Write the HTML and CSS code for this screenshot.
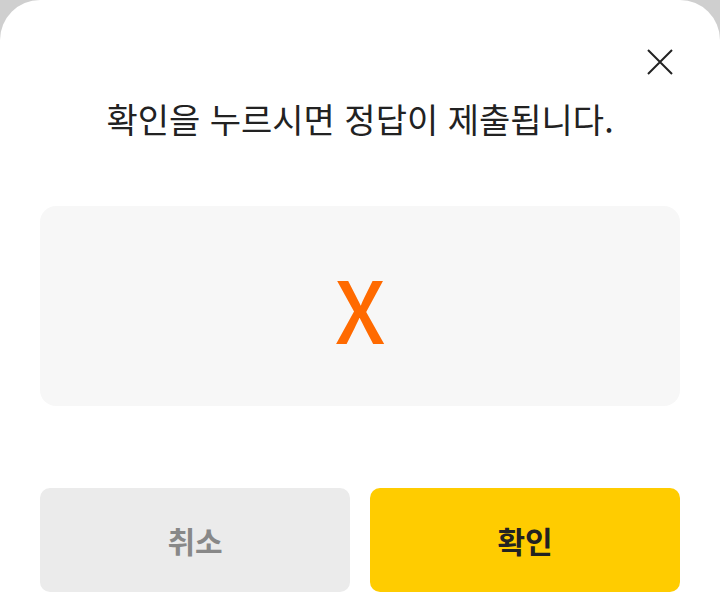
FILE: index.html
```html
<!DOCTYPE html>
<html lang="ko">
<head>
<meta charset="utf-8">
<link rel="stylesheet" href="styles.css">
</head>
<body>
<div class="sheet">
  <div class="header">
    <button class="close" aria-label="닫기">
      <svg width="26" height="26" viewBox="0 0 26 26"><path d="M1 1L25 25M25 1L1 25" stroke="#222" stroke-width="2" fill="none"/></svg>
    </button>
  </div>
  <p class="title">확인을 누르시면 정답이 제출됩니다.</p>
  <div class="answer"><span class="mark">X</span></div>
  <div class="actions">
    <button class="btn cancel">취소</button>
    <button class="btn confirm">확인</button>
  </div>
</div>
</body>
</html>
```
FILE: styles.css
```css
html, body {
  margin: 0;
  padding: 0;
  background: #cfcfcf;
  font-family: "Noto Sans CJK KR", "Noto Sans", sans-serif;
}
.sheet {
  box-sizing: border-box;
  width: 720px;
  height: 612px;
  background: #fff;
  border-radius: 40px 40px 0 0;
  padding: 42px 40px 0;
  display: flex;
  flex-direction: column;
}
.header {
  display: flex;
  justify-content: flex-end;
  height: 40px;
}
.close {
  width: 40px;
  height: 40px;
  border: 0;
  padding: 0;
  background: none;
  display: flex;
  align-items: center;
  justify-content: center;
}
.title {
  margin: 17px 0 0;
  text-align: center;
  font-size: 34px;
  line-height: 40px;
  font-weight: 400;
  color: #222;
  white-space: nowrap;
}
.answer {
  margin-top: 67px;
  height: 200px;
  border-radius: 16px;
  background: #f7f7f7;
  display: flex;
  align-items: center;
  justify-content: center;
}
.mark {
  font-size: 85px;
  font-weight: 500;
  color: #ff6a00;
  line-height: 1;
}
.actions {
  margin-top: 82px;
  display: flex;
  gap: 20px;
}
.btn {
  flex: 1;
  height: 104px;
  border: 0;
  border-radius: 10px;
  font-family: inherit;
  font-size: 30px;
  font-weight: 700;
}
.cancel {
  background: #ebebeb;
  color: #888;
}
.confirm {
  background: #ffcc00;
  color: #222;
}
```
